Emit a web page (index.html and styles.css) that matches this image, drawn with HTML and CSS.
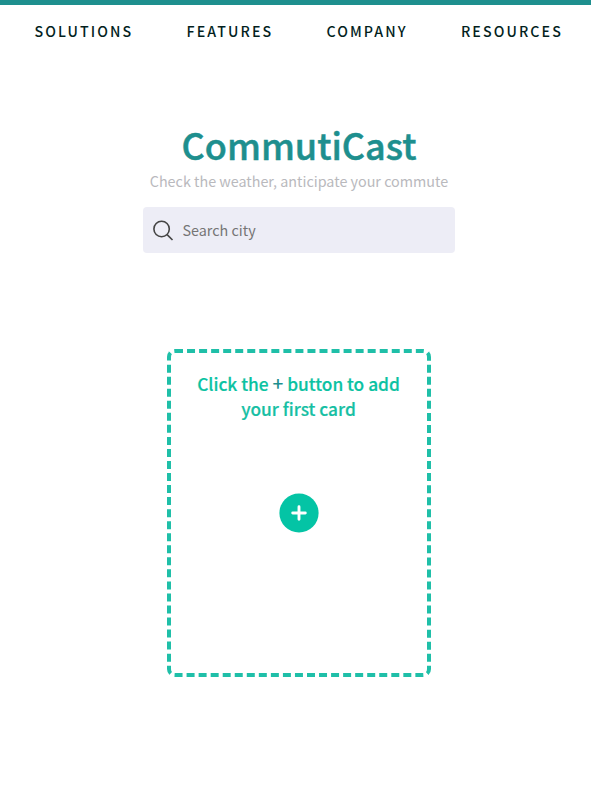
FILE: index.html
```html
<!DOCTYPE html>
<html lang="en">
<head>
<meta charset="utf-8">
<title>CommutiCast</title>
<link rel="stylesheet" href="styles.css">
</head>
<body>
<nav class="nav">
  <a class="nav-link">SOLUTIONS</a>
  <a class="nav-link">FEATURES</a>
  <a class="nav-link">COMPANY</a>
  <a class="nav-link">RESOURCES</a>
</nav>
<main class="main">
  <h1 class="title">CommutiCast</h1>
  <p class="tagline">Check the weather, anticipate your commute</p>
  <label class="search">
    <svg class="search-icon" width="22" height="22" viewBox="0 0 22 22" fill="none" stroke="#444" stroke-width="1.6"><circle cx="9.6" cy="10" r="7.7"/><path d="M15.1 15.6l5.4 5.4"/></svg>
    <input class="search-input" type="text" placeholder="Search city">
  </label>
  <section class="card">
    <p class="card-text">Click the <span class="plus">+</span> button to add<br>your first card</p>
    <button class="add" aria-label="Add card">
      <svg width="40" height="40" viewBox="0 0 40 40"><circle cx="20" cy="20" r="19.6" fill="#04c4a5"/><path d="M20 13.7v12.6M13.7 20h12.6" stroke="#fff" stroke-width="2.9" stroke-linecap="round"/></svg>
    </button>
  </section>
</main>
</body>
</html>
```
FILE: styles.css
```css
* { box-sizing: border-box; }
body {
  margin: 0;
  background: #fff;
  border-top: 5px solid #1e8f8e;
  font-family: "Noto Sans CJK SC", sans-serif;
}
.nav {
  display: flex;
  justify-content: space-between;
  padding: 14px 28px 0 34.5px;
  height: 54px;
}
.nav-link {
  font-size: 14.2px;
  font-weight: 500;
  line-height: 24px;
  letter-spacing: 2.1px;
  color: #031f1e;
}
.main {
  display: flex;
  flex-direction: column;
  align-items: center;
  padding: 61px 0 0 7px;
}
.title {
  margin: 0 0 1px;
  font-size: 36px;
  font-weight: 500;
  line-height: 48px;
  color: #1e8f8e;
  -webkit-text-stroke: 0.5px #1e8f8e;
}
.tagline {
  margin: 0;
  font-size: 14.35px;
  line-height: 24px;
  color: #b9b9bd;
}
.search {
  display: flex;
  align-items: center;
  width: 312px;
  height: 46px;
  margin-top: 14px;
  padding-left: 9px;
  border-radius: 4px;
  background: #ededf6;
}
.search-input {
  flex: 1;
  min-width: 0;
  margin-left: 8.5px;
  padding: 0;
  border: 0;
  outline: 0;
  background: transparent;
  font: 14.35px/24px "Noto Sans CJK SC", sans-serif;
}
.search-input::placeholder { color: #757575; }
.card {
  display: flex;
  flex-direction: column;
  align-items: center;
  width: 264px;
  height: 328px;
  margin-top: 96px;
  padding-top: 18px;
  border: 4px dashed #1fbfa8;
  border-radius: 8px;
}
.card-text {
  margin: 0 1px 0 0;
  font-size: 17.3px;
  font-weight: 500;
  line-height: 25px;
  text-align: center;
  color: #16bfa4;
  -webkit-text-stroke: 0.2px #16bfa4;
}
.card-text::first-line { color: #0ac3a2; }
.plus {
  color: #1e8f8e;
  font-size: 19px;
  line-height: 20px;
  -webkit-text-stroke: 0;
}
.add {
  display: flex;
  margin-top: 72px;
  padding: 0;
  border: 0;
  background: none;
}
```
